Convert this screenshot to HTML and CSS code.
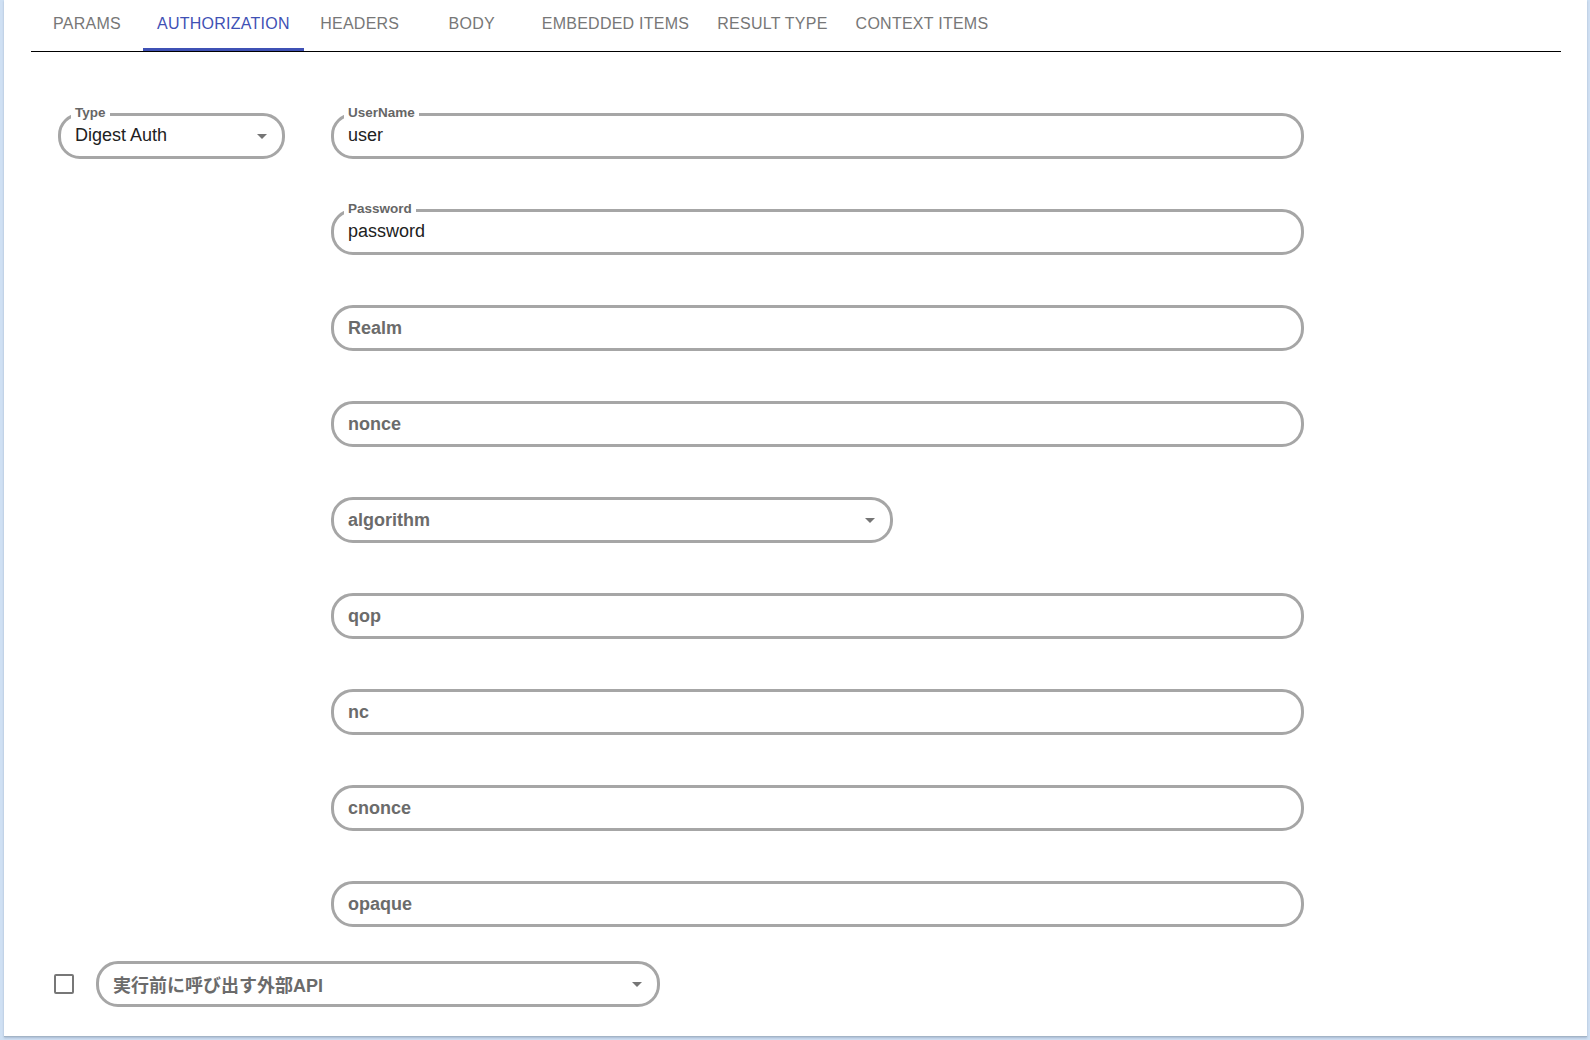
FILE: index.html
```html
<!DOCTYPE html>
<html lang="ja">
<head>
<meta charset="utf-8">
<title>Authorization</title>
<link rel="stylesheet" href="styles.css">
</head>
<body>
<div class="card">
  <div class="tabs">
    <div class="tab">PARAMS</div>
    <div class="tab active">AUTHORIZATION</div>
    <div class="tab">HEADERS</div>
    <div class="tab">BODY</div>
    <div class="tab">EMBEDDED ITEMS</div>
    <div class="tab">RESULT TYPE</div>
    <div class="tab">CONTEXT ITEMS</div>
  </div>

  <div class="auth">
    <div class="col-left">
      <div class="field select">
        <span class="label">Type</span>
        <span class="value">Digest Auth</span>
        <svg class="arrow" viewBox="0 0 10 5" width="10" height="5"><path d="M0 0L5 5L10 0Z"/></svg>
      </div>
    </div>
    <div class="col-right">
      <div class="field">
        <span class="label">UserName</span>
        <span class="value">user</span>
      </div>
      <div class="field">
        <span class="label">Password</span>
        <span class="value">password</span>
      </div>
      <div class="field"><span class="placeholder">Realm</span></div>
      <div class="field"><span class="placeholder">nonce</span></div>
      <div class="field select narrow">
        <span class="placeholder">algorithm</span>
        <svg class="arrow" viewBox="0 0 10 5" width="10" height="5"><path d="M0 0L5 5L10 0Z"/></svg>
      </div>
      <div class="field"><span class="placeholder">qop</span></div>
      <div class="field"><span class="placeholder">nc</span></div>
      <div class="field"><span class="placeholder">cnonce</span></div>
      <div class="field"><span class="placeholder">opaque</span></div>
    </div>
  </div>

  <div class="api-row">
    <span class="checkbox"></span>
    <div class="field select api">
      <span class="placeholder jp">実行前に呼び出す外部API</span>
      <svg class="arrow" viewBox="0 0 10 5" width="10" height="5"><path d="M0 0L5 5L10 0Z"/></svg>
    </div>
  </div>
</div>
</body>
</html>
```

FILE: styles.css
```css
html, body {
  margin: 0;
  padding: 0;
}

body {
  background: #cfe0f3;
  font-family: "Liberation Sans", Arial, "Noto Sans CJK JP", sans-serif;
  height: 1040px;
  overflow: hidden;
}

.card {
  margin: 0 3px 0 4px;
  height: 1037px;
  box-sizing: border-box;
  background: #ffffff;
  border-bottom: 1px solid #a3b4c6;
  box-shadow: 0 1px 2px rgba(90, 110, 140, 0.35);
}

.tabs {
  display: flex;
  margin: 0 26px 0 27px;
  height: 52px;
  box-sizing: border-box;
  border-bottom: 1px solid #000000;
}

.tab {
  min-width: 112px;
  height: 51px;
  box-sizing: border-box;
  padding: 0 14px 1px;
  display: flex;
  align-items: center;
  justify-content: center;
  font-size: 16px;
  letter-spacing: 0.25px;
  color: #777777;
  border-bottom: 3px solid transparent;
  white-space: nowrap;
}

.tab.active {
  color: #3f51b5;
  border-bottom-color: #3f51b5;
}

.auth {
  display: grid;
  grid-template-columns: 227px 973px;
  column-gap: 46px;
  margin-top: 61px;
  padding-left: 54px;
  align-items: start;
}

.col-right {
  display: flex;
  flex-direction: column;
  gap: 50px;
}

.field {
  position: relative;
  height: 46px;
  box-sizing: border-box;
  border: 3px solid #a6a6a6;
  border-radius: 22px;
  display: flex;
  align-items: center;
  padding: 0 15px 0 14px;
  background: #ffffff;
}

.field.narrow {
  width: 562px;
}

.label {
  position: absolute;
  top: -10px;
  left: 10px;
  padding: 0 4px;
  background: #ffffff;
  font-size: 13.5px;
  line-height: 13px;
  font-weight: bold;
  color: #666666;
}

.value {
  font-size: 18px;
  color: #212121;
  margin-bottom: 2px;
}

.placeholder {
  font-size: 18px;
  font-weight: bold;
  color: #6b6b6b;
}

.arrow {
  margin-left: auto;
  fill: #757575;
}

.api-row {
  display: flex;
  align-items: center;
  gap: 22px;
  margin-top: 34px;
  padding-left: 50px;
}

.checkbox {
  width: 20px;
  height: 20px;
  box-sizing: border-box;
  border: 2px solid #777777;
  border-radius: 2px;
}

.field.api {
  width: 564px;
}

.placeholder.jp {
  font-family: "Liberation Sans", "Noto Sans CJK JP", sans-serif;
}
```
